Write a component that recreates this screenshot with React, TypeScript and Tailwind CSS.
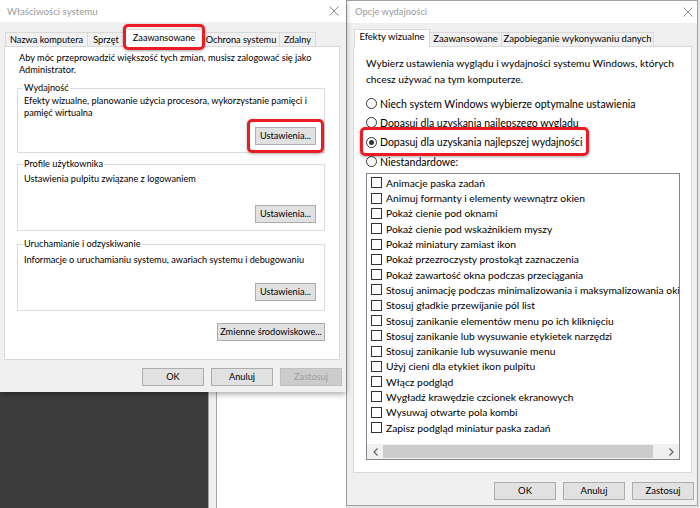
import React from 'react';

type BtnProps = { children: React.ReactNode; className?: string; disabled?: boolean };

function WinButton({ children, className = '', disabled = false }: BtnProps) {
  return (
    <button
      type="button"
      className={`flex h-[18px] items-center justify-center whitespace-nowrap border leading-none ${
        disabled ? 'border-[#bfbfbf] bg-[#cccccc] text-[#9d9d9d]' : 'border-[#adadad] bg-[#e1e1e1] text-black'
      } ${className}`}
    >
      {children}
    </button>
  );
}

// red marker drawn over the screenshot
function Highlight({ className }: { className: string }) {
  return (
    <span
      className={`pointer-events-none absolute z-20 rounded-[5px] border-[3px] border-[#ec1c24] shadow-[0_1px_3px_rgba(0,0,0,0.35)] ${className}`}
    />
  );
}

const CloseIcon = () => (
  <svg width="10" height="10" viewBox="0 0 10 10" className="block">
    <path d="M0.5 0.5L9.5 9.5M9.5 0.5L0.5 9.5" stroke="#8c8c8c" strokeWidth="1" fill="none" />
  </svg>
);

function GroupBox({ title, children, className = '' }: { title: string; children: React.ReactNode; className?: string }) {
  return (
    <fieldset className={`border border-[#dcdcdc] px-[5px] ${className}`}>
      <legend className="px-[1px] text-[9.2px] leading-[12px]">{title}</legend>
      {children}
    </fieldset>
  );
}

function Radio({ checked = false }: { checked?: boolean }) {
  return (
    <span className="flex h-[11px] w-[11px] shrink-0 items-center justify-center rounded-full border border-[#333333] bg-white">
      {checked && <span className="h-[5px] w-[5px] rounded-full bg-[#333333]" />}
    </span>
  );
}

const effects = [
  'Animacje paska zadań',
  'Animuj formanty i elementy wewnątrz okien',
  'Pokaż cienie pod oknami',
  'Pokaż cienie pod wskaźnikiem myszy',
  'Pokaż miniatury zamiast ikon',
  'Pokaż przezroczysty prostokąt zaznaczenia',
  'Pokaż zawartość okna podczas przeciągania',
  'Stosuj animację podczas minimalizowania i maksymalizowania okien',
  'Stosuj gładkie przewijanie pól list',
  'Stosuj zanikanie elementów menu po ich kliknięciu',
  'Stosuj zanikanie lub wysuwanie etykietek narzędzi',
  'Stosuj zanikanie lub wysuwanie menu',
  'Użyj cieni dla etykiet ikon pulpitu',
  'Włącz podgląd',
  'Wygładź krawędzie czcionek ekranowych',
  'Wysuwaj otwarte pola kombi',
  'Zapisz podgląd miniatur paska zadań',
];

function SystemProperties() {
  return (
    <div className="relative z-10 flex h-[392px] flex-col bg-[#f0f0f0] shadow-[0_2px_6px_rgba(0,0,0,0.35)]">
      <div className="flex h-[22px] items-center justify-between bg-white pl-[7px] pr-[7px] text-[9.7px] text-[#9a9a9a]">
        <span>Właściwości systemu</span>
        <CloseIcon />
      </div>

      <div className="pl-[4px] pt-[7px]">
        <div className="relative z-10 flex h-[17px] items-end whitespace-nowrap pl-[1px] text-[9.2px]">
          <div className="flex h-[14px] w-[83px] items-center justify-center border border-b-0 border-[#d9d9d9]">Nazwa komputera</div>
          <div className="flex h-[14px] w-[37px] items-center justify-center border border-b-0 border-l-0 border-[#d9d9d9]">Sprzęt</div>
          <div className="relative -mb-px flex h-[18px] w-[78px] items-center justify-center border border-b-0 border-[#d9d9d9] bg-white pb-[2px]">
            Zaawansowane
            <Highlight className="top-[-6px] bottom-[-3px] left-[-3px] right-[-3px]" />
          </div>
          <div className="flex h-[14px] w-[77px] items-center justify-center border border-b-0 border-l-0 border-[#d9d9d9]">Ochrona systemu</div>
          <div className="flex h-[14px] w-[36px] items-center justify-center border border-b-0 border-l-0 border-[#d9d9d9]">Zdalny</div>
        </div>

        <div className="h-[314px] w-[336px] whitespace-nowrap border border-[#d9d9d9] bg-white pt-[5px] text-[9.2px] leading-[12px]">
          <p className="ml-[14px]">
            Aby móc przeprowadzić większość tych zmian, musisz zalogować się jako
            <br />
            Administrator.
          </p>

          <GroupBox title="Wydajność" className="ml-[12px] mt-[6px] w-[308px] pb-[7px]">
            <p className="ml-[1px] mt-[1px]">
              Efekty wizualne, planowanie użycia procesora, wykorzystanie pamięci i
              <br />
              pamięć wirtualna
            </p>
            <div className="mt-[8px] flex justify-end pr-[3px]">
              <div className="relative">
                <WinButton className="w-[61px] text-[9.2px]">Ustawienia...</WinButton>
                <Highlight className="top-[-8px] bottom-[-8px] left-[-8px] right-[-8px]" />
              </div>
            </div>
          </GroupBox>

          <GroupBox title="Profile użytkownika" className="ml-[12px] mt-[5px] w-[308px] pb-[7px]">
            <p className="ml-[1px] mt-[3px]">Ustawienia pulpitu związane z logowaniem</p>
            <div className="mt-[20px] flex justify-end pr-[3px]">
              <WinButton className="w-[61px] text-[9.2px]">Ustawienia...</WinButton>
            </div>
          </GroupBox>

          <GroupBox title="Uruchamianie i odzyskiwanie" className="ml-[12px] mt-[7px] w-[308px] pb-[9px]">
            <p className="ml-[1px] mt-[4px]">Informacje o uruchamianiu systemu, awariach systemu i debugowaniu</p>
            <div className="mt-[17px] flex justify-end pr-[3px]">
              <WinButton className="w-[61px] text-[9.2px]">Ustawienia...</WinButton>
            </div>
          </GroupBox>

          <div className="ml-[12px] mt-[12px] flex w-[308px] justify-end">
            <WinButton className="w-[108px] text-[9.2px]">Zmienne środowiskowe...</WinButton>
          </div>
        </div>
      </div>

      <div className="flex justify-end gap-[7px] pr-[4px] pt-[8px]">
        <WinButton className="w-[62px] text-[9.2px]">OK</WinButton>
        <WinButton className="w-[62px] text-[9.2px]">Anuluj</WinButton>
        <WinButton className="w-[62px] text-[9.2px]" disabled>
          Zastosuj
        </WinButton>
      </div>
    </div>
  );
}

function PerformanceOptions() {
  return (
    <div className="flex h-[506px] w-[352px] shrink-0 flex-col border border-[#a0a0a0] bg-[#f0f0f0]">
      <div className="flex h-[22px] items-center justify-between bg-white pl-[8px] pr-[4px] text-[9.4px] text-[#9a9a9a]">
        <span>Opcje wydajności</span>
        <CloseIcon />
      </div>

      <div className="pl-[6px] pt-[6px]">
        <div className="relative z-10 flex h-[17px] items-end whitespace-nowrap pl-[1px] text-[9.5px]">
          <div className="-mb-px flex h-[18px] w-[76px] items-center justify-center border border-b-0 border-[#d9d9d9] bg-white pb-[2px]">
            Efekty wizualne
          </div>
          <div className="flex h-[14px] w-[72px] items-center justify-center border border-b-0 border-l-0 border-[#d9d9d9]">Zaawansowane</div>
          <div className="flex h-[14px] w-[152px] items-center justify-center border border-b-0 border-l-0 border-[#d9d9d9]">
            Zapobieganie wykonywaniu danych
          </div>
        </div>

        <div className="h-[427px] w-[339px] whitespace-nowrap border border-[#d9d9d9] bg-white pl-[12px] pt-[8px] text-[10.5px] leading-[16px]">
          <p className="text-[10.2px]">
            Wybierz ustawienia wyglądu i wydajności systemu Windows, których
            <br />
            chcesz używać na tym komputerze.
          </p>

          <div className="mt-[7px] flex flex-col">
            <div className="flex h-[19.3px] items-center gap-[3px]">
              <Radio />
              <span>Niech system Windows wybierze optymalne ustawienia</span>
            </div>
            <div className="flex h-[19.3px] items-center gap-[3px]">
              <Radio />
              <span>Dopasuj dla uzyskania najlepszego wyglądu</span>
            </div>
            <div className="flex h-[19.3px] items-center">
              <div className="relative flex items-center gap-[3px]">
                <Radio checked />
                <span>Dopasuj dla uzyskania najlepszej wydajności</span>
                <Highlight className="top-[-7px] bottom-[-6px] left-[-6px] right-[-7px]" />
              </div>
            </div>
            <div className="flex h-[19.3px] items-center gap-[3px]">
              <Radio />
              <span>Niestandardowe:</span>
            </div>
          </div>

          <div className="mt-[2px] flex h-[287px] w-[314px] flex-col border border-[#828790]">
            <div className="flex-1 overflow-hidden pl-[4px] pt-[1px] text-[10.3px]">
              {effects.map((label) => (
                <div key={label} className="flex h-[15.3px] items-center gap-[4px] whitespace-nowrap">
                  <span className="h-[11px] w-[11px] shrink-0 border border-[#333333] bg-white" />
                  <span>{label}</span>
                </div>
              ))}
            </div>
            <div className="flex h-[15px] items-center bg-[#f0f0f0]">
              <div className="flex w-[16px] justify-center">
                <svg width="5" height="8" viewBox="0 0 5 8">
                  <path d="M4.5 0.5L1 4l3.5 3.5" stroke="#606060" strokeWidth="1.2" fill="none" />
                </svg>
              </div>
              <div className="h-[13px] w-[270px] bg-[#cdcdcd]" />
              <div className="flex-1" />
              <div className="flex w-[16px] justify-center">
                <svg width="5" height="8" viewBox="0 0 5 8">
                  <path d="M0.5 0.5L4 4L0.5 7.5" stroke="#606060" strokeWidth="1.2" fill="none" />
                </svg>
              </div>
            </div>
          </div>
        </div>
      </div>

      <div className="flex justify-end gap-[7px] pr-[3px] pt-[9px]">
        <WinButton className="w-[62px] text-[9.5px]">OK</WinButton>
        <WinButton className="w-[62px] text-[9.5px]">Anuluj</WinButton>
        <WinButton className="w-[62px] text-[9.5px]">Zastosuj</WinButton>
      </div>
    </div>
  );
}

export default function App() {
  return (
    <div className="flex h-[508px] w-[700px] overflow-hidden bg-[#e6e6e6] font-['Lato',sans-serif] text-black">
      <div className="flex w-[346px] shrink-0 flex-col">
        <SystemProperties />
        <div className="flex flex-1">
          <div className="w-[208px] bg-[#3c3c3c]" />
          <div className="w-[9px] border-x border-[#a5a5a5] bg-[#f0f0f0]" />
          <div className="flex-1 bg-white" />
        </div>
      </div>
      <PerformanceOptions />
    </div>
  );
}
